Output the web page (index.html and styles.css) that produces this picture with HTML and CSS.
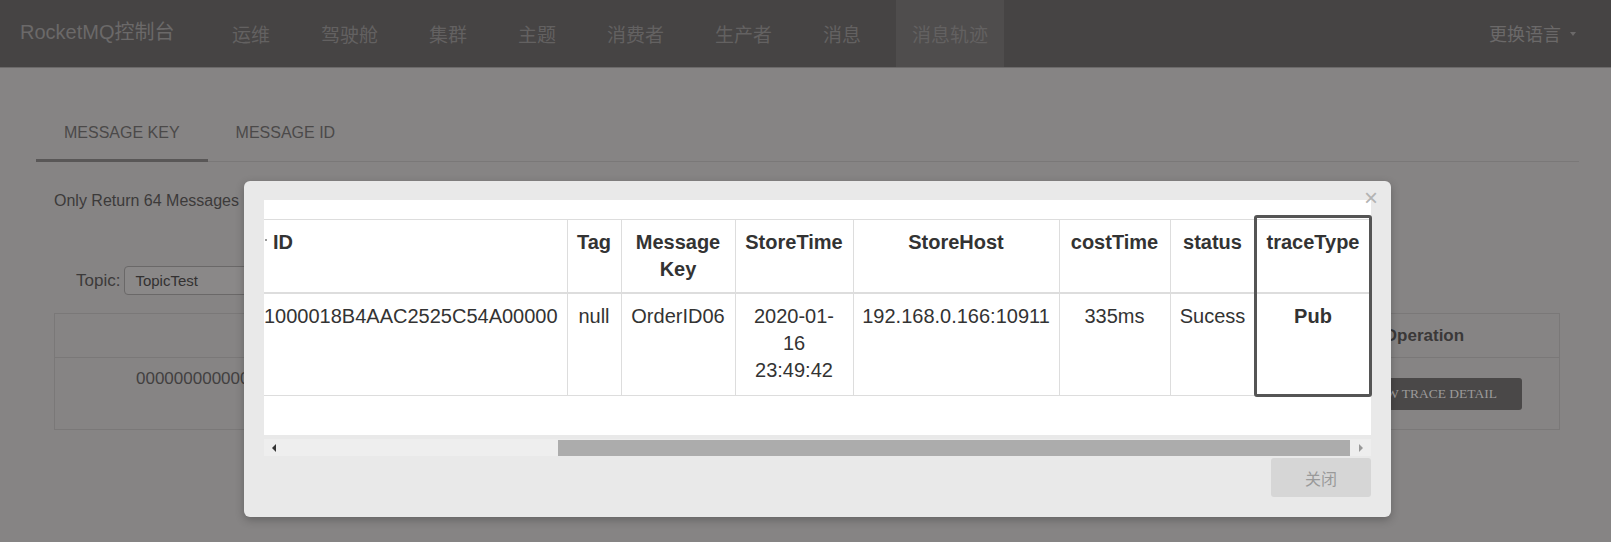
FILE: index.html
```html
<!DOCTYPE html>
<html lang="zh-CN">
<head>
<meta charset="utf-8">
<title>RocketMQ控制台</title>
<link rel="stylesheet" href="styles.css">
</head>
<body>
<header class="navbar">
  <div class="brand">RocketMQ控制台</div>
  <ul class="nav">
    <li><a>运维</a></li>
    <li><a>驾驶舱</a></li>
    <li><a>集群</a></li>
    <li><a>主题</a></li>
    <li><a>消费者</a></li>
    <li><a>生产者</a></li>
    <li><a>消息</a></li>
    <li class="active"><a>消息轨迹</a></li>
  </ul>
  <div class="lang">更换语言<span class="caret"></span></div>
</header>

<main class="main">
  <div class="tabs">
    <div class="tab active">MESSAGE KEY</div>
    <div class="tab">MESSAGE ID</div>
  </div>
  <div class="info">Only Return 64 Messages</div>
  <div class="topic-row">
    <span class="topic-label">Topic:</span>
    <div class="select">TopicTest</div>
  </div>
  <table class="bg-table">
    <thead>
      <tr><th class="bg-c1"></th><th class="bg-c2">Operation</th></tr>
    </thead>
    <tbody>
      <tr>
        <td class="bg-id">0000000000000000000000000000000</td>
        <td class="bg-op"><span class="trace-btn">VIEW TRACE DETAIL</span></td>
      </tr>
    </tbody>
  </table>
</main>

<div class="modal">
  <span class="close">&times;</span>
  <div class="modal-body">
    <table class="trace-table">
      <colgroup>
        <col class="w-id"><col class="w-tag"><col class="w-key"><col class="w-time">
        <col class="w-host"><col class="w-cost"><col class="w-status"><col class="w-type">
      </colgroup>
      <thead>
        <tr>
          <th class="left id-head"><span class="dot"></span>ID</th>
          <th>Tag</th>
          <th>Message Key</th>
          <th>StoreTime</th>
          <th>StoreHost</th>
          <th>costTime</th>
          <th>status</th>
          <th>traceType</th>
        </tr>
      </thead>
      <tbody>
        <tr>
          <td class="left nowrap id-cell">1000018B4AAC2525C54A00000</td>
          <td>null</td>
          <td>OrderID06</td>
          <td>2020-01-16 23:49:42</td>
          <td>192.168.0.166:10911</td>
          <td>335ms</td>
          <td>Sucess</td>
          <td class="bold">Pub</td>
        </tr>
      </tbody>
    </table>
  </div>
  <div class="scrollbar">
    <span class="arrow-left"></span>
    <div class="track"><div class="thumb"></div></div>
    <span class="arrow-right"></span>
  </div>
  <div class="modal-footer">
    <button class="btn-close">关闭</button>
  </div>
  <div class="highlight"></div>
</div>
</body>
</html>
```

FILE: styles.css
```css
* { box-sizing: border-box; }

html, body {
  margin: 0;
  padding: 0;
}

body {
  width: 1611px;
  height: 542px;
  overflow: hidden;
  background: #868484;
  font-family: "Liberation Sans", "Noto Sans CJK SC", sans-serif;
  color: #3c3a3a;
  position: relative;
}

/* ---------- navbar ---------- */
.navbar {
  display: flex;
  align-items: stretch;
  height: 68px;
  background: #464444;
  border-bottom: 1px solid #6c6a6a;
  padding: 0 35px 0 20px;
}

.brand {
  width: 196px;
  font-size: 20px;
  line-height: 65px;
  color: #6b6969;
  white-space: nowrap;
}

.nav {
  display: flex;
  gap: 19px;
  list-style: none;
  margin: 0;
  padding: 0;
}

.nav li a {
  display: block;
  padding: 0 16px;
  font-size: 19px;
  line-height: 67px;
  color: #636161;
  font-family: "Noto Sans CJK SC", sans-serif;
}

.nav li.active a {
  background: #4f4d4d;
}

.lang {
  margin-left: auto;
  font-size: 18px;
  line-height: 67px;
  color: #6b6969;
  font-family: "Noto Sans CJK SC", sans-serif;
  display: flex;
  align-items: center;
}

.caret {
  display: inline-block;
  margin-left: 9px;
  border-top: 4px solid #6b6969;
  border-left: 3px solid transparent;
  border-right: 3px solid transparent;
}

/* ---------- page content ---------- */
.main {
  padding: 37px 32px 0 36px;
}

.tabs {
  display: flex;
  border-bottom: 1px solid #7a7878;
}

.tab {
  padding: 18px 28px 16px;
  font-size: 16px;
  line-height: 20px;
  color: #4b4949;
  border-bottom: 3px solid transparent;
  margin-bottom: -1px;
}

.tab.active {
  border-bottom-color: #595757;
}

.info {
  margin: 29px 0 0 18px;
  font-size: 16px;
  line-height: 20px;
  color: #3c3a3a;
}

.topic-row {
  display: flex;
  align-items: center;
  height: 29px;
  margin-top: 55px;
  padding-left: 40px;
}

.topic-label {
  font-size: 17px;
  color: #3c3a3a;
}

.select {
  margin-left: 4px;
  width: 300px;
  height: 29px;
  border: 1px solid #6a6868;
  border-radius: 4px;
  background: #8a8888;
  padding-left: 10px;
  font-size: 15px;
  line-height: 27px;
  color: #333131;
}

.bg-table {
  margin: 18px 0 0 18px;
  width: 1505px;
  border-collapse: collapse;
  table-layout: fixed;
}

.bg-table th,
.bg-table td {
  border: 1px solid #7a7878;
}

.bg-table th {
  height: 44px;
  font-size: 17px;
  font-weight: bold;
  color: #3a3838;
}

.bg-c1 { width: 1227px; }
.bg-c2 { width: 278px; text-align: center; padding-left: 8px; }

.bg-table td {
  height: 72px;
  vertical-align: top;
}

.bg-id {
  padding: 11px 0 0 81px;
  font-size: 17px;
  line-height: 20px;
  color: #424040;
  white-space: nowrap;
  overflow: hidden;
}

.bg-op {
  padding: 20px 37px 0 0;
  text-align: right;
}

.trace-btn {
  display: inline-block;
  height: 32px;
  padding: 0 25px;
  background: #4a4848;
  border-radius: 3px;
  font-family: "Liberation Serif", serif;
  font-size: 13.5px;
  line-height: 32px;
  color: #9c9a9a;
}

/* ---------- modal ---------- */
.modal {
  position: absolute;
  left: 244px;
  top: 181px;
  width: 1147px;
  height: 336px;
  padding: 19px 20px;
  background: #e9e9e9;
  border-radius: 6px;
  box-shadow: 0 3px 8px rgba(0, 0, 0, 0.25);
}

.close {
  position: absolute;
  right: 13px;
  top: 3px;
  font-size: 24px;
  line-height: 28px;
  color: #b3b3b3;
}

.modal-body {
  height: 235px;
  background: #ffffff;
  overflow: hidden;
  padding-top: 19px;
}

.trace-table {
  width: 1107px;
  table-layout: fixed;
  border-collapse: collapse;
  font-size: 20px;
  line-height: 27px;
  color: #333333;
}

.w-id { width: 303px; }
.w-tag { width: 54px; }
.w-key { width: 114px; }
.w-time { width: 118px; }
.w-host { width: 206px; }
.w-cost { width: 111px; }
.w-status { width: 85px; }
.w-type { width: 116px; }

.trace-table th,
.trace-table td {
  border: 1px solid #dddddd;
  padding: 9px 8px;
  text-align: center;
  vertical-align: top;
}

.trace-table td {
  padding-bottom: 11px;
}

.trace-table tr > :first-child {
  border-left: none;
}

.trace-table th {
  font-weight: bold;
  border-bottom: 2px solid #dddddd;
}

.trace-table .left { text-align: left; }
.trace-table .nowrap { white-space: nowrap; }
.trace-table .bold { font-weight: bold; }

.trace-table .id-head { padding-left: 0; }
.trace-table .id-cell { padding-left: 0; }

.dot {
  display: inline-block;
  width: 2px;
  height: 2px;
  margin: 0 6px 7px 1px;
  background: #9a9a9a;
  vertical-align: middle;
}

.scrollbar {
  display: flex;
  align-items: center;
  height: 25px;
  background: linear-gradient(#eeeeee, #eeeeee) center / 100% 17px no-repeat;
}

.arrow-left {
  width: 0;
  height: 0;
  margin: 0 9px 0 8px;
  border-right: 4px solid #333;
  border-top: 4px solid transparent;
  border-bottom: 4px solid transparent;
}

.track {
  flex: 1;
  height: 16px;
  display: flex;
  justify-content: flex-end;
}

.thumb {
  width: 792px;
  height: 16px;
  background: #acacac;
}

.arrow-right {
  width: 0;
  height: 0;
  margin: 0 8px 0 9px;
  border-left: 4px solid #999;
  border-top: 4px solid transparent;
  border-bottom: 4px solid transparent;
}

.modal-footer {
  display: flex;
  justify-content: flex-end;
  margin-top: -2px;
}

.btn-close {
  width: 100px;
  height: 39px;
  border: none;
  border-radius: 3px;
  background: #d6d6d6;
  color: #9a9a9a;
  font-family: "Noto Sans CJK SC", sans-serif;
  font-size: 16px;
}

.highlight {
  position: absolute;
  left: 1010px;
  top: 34px;
  width: 118px;
  height: 182px;
  border: 3px solid #555555;
  border-radius: 3px;
  pointer-events: none;
}
```
